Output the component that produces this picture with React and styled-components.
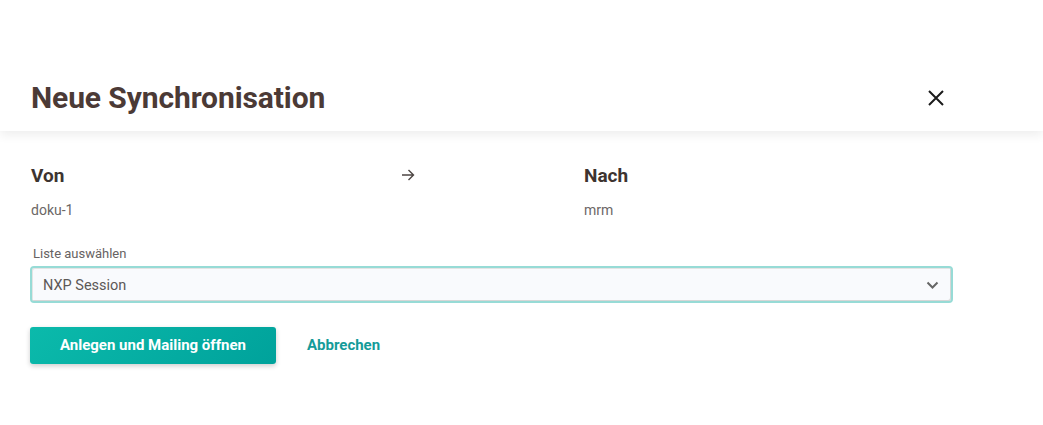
import React from 'react';
import styled, { createGlobalStyle } from 'styled-components';

const GlobalStyle = createGlobalStyle`
  html, body {
    margin: 0;
    padding: 0;
    background: #ffffff;
    font-family: Roboto, "Liberation Sans", sans-serif;
  }
`;

const Page = styled.div`
  width: 1043px;
  height: 425px;
  overflow: hidden;
  background: #ffffff;
`;

const Header = styled.header`
  height: 131px;
  box-sizing: border-box;
  padding: 64px 0 0 31px;
  display: flex;
  align-items: center;
  background: #ffffff;
  box-shadow: 0 4px 10px rgba(0, 0, 0, 0.07);
  position: relative;
  z-index: 1;
`;

const HeaderInner = styled.div`
  width: 917px;
  height: 67px;
  display: flex;
  align-items: center;
  justify-content: space-between;
`;

const Title = styled.h1`
  margin: 0;
  font-size: 30px;
  font-weight: 700;
  letter-spacing: -0.1px;
  color: #4b3a36;
`;

const CloseButton = styled.button`
  width: 24px;
  height: 24px;
  padding: 0;
  border: none;
  background: none;
  display: flex;
  align-items: center;
  justify-content: center;
  cursor: pointer;
`;

const Body = styled.main`
  padding: 33px 90px 0 30px;
`;

const Route = styled.div`
  display: grid;
  grid-template-columns: 370px 183px 1fr;
  padding-left: 1px;
`;

const Side = styled.div`
  display: flex;
  flex-direction: column;
  gap: 12px;
`;

const SideTitle = styled.div`
  font-size: 19px;
  font-weight: 700;
  color: #3d3430;
  line-height: 24px;
`;

const SideValue = styled.div`
  font-size: 14px;
  color: #6c6766;
  line-height: 20px;
`;

const ArrowCell = styled.div`
  padding-top: 2px;
  color: #4d4644;
`;

const Field = styled.div`
  margin-top: 25px;
  display: flex;
  flex-direction: column;
  gap: 3px;
`;

const Label = styled.label`
  font-size: 13px;
  color: #676262;
  padding-left: 3px;
  line-height: 18px;
`;

const Select = styled.div`
  height: 37px;
  box-sizing: border-box;
  border: 2px solid #97dbd6;
  border-radius: 4px;
  background: #f9fafd;
  box-shadow: inset -1px -1px 0 #d6d6d6, inset 1px 1px 0 #e4e4e4;
  display: flex;
  align-items: center;
  justify-content: space-between;
  padding: 1px 12px 0 11px;
  font-size: 14.5px;
  color: #5c5857;
`;

const Actions = styled.div`
  margin-top: 24px;
  display: flex;
  align-items: center;
  gap: 31px;
`;

const PrimaryButton = styled.button`
  width: 246px;
  height: 37px;
  padding: 0 0 1px;
  border: none;
  border-radius: 3px;
  background: linear-gradient(135deg, #0bbaab 0%, #00a29b 100%);
  box-shadow: 0 2px 5px rgba(0, 0, 0, 0.2);
  color: #ffffff;
  font-family: inherit;
  font-size: 15px;
  font-weight: 700;
  cursor: pointer;
`;

const TextButton = styled.button`
  border: none;
  background: none;
  padding: 0 0 1px;
  font-family: inherit;
  font-size: 15px;
  font-weight: 700;
  color: #149b99;
  cursor: pointer;
`;

export default function App() {
  return (
    <Page>
      <GlobalStyle />
      <Header>
        <HeaderInner>
          <Title>Neue Synchronisation</Title>
          <CloseButton aria-label="Schließen">
            <svg width="16" height="16" viewBox="0 0 16 16">
              <path d="M1 1L15 15M15 1L1 15" stroke="#1b1b1b" strokeWidth="2" fill="none" />
            </svg>
          </CloseButton>
        </HeaderInner>
      </Header>
      <Body>
        <Route>
          <Side>
            <SideTitle>Von</SideTitle>
            <SideValue>doku-1</SideValue>
          </Side>
          <ArrowCell>
            <svg width="14" height="12" viewBox="0 0 14 12">
              <path d="M1 6H12.5M7.5 1L12.5 6L7.5 11" stroke="currentColor" strokeWidth="1.4" fill="none" />
            </svg>
          </ArrowCell>
          <Side>
            <SideTitle>Nach</SideTitle>
            <SideValue>mrm</SideValue>
          </Side>
        </Route>
        <Field>
          <Label>Liste auswählen</Label>
          <Select>
            <span>NXP Session</span>
            <svg width="13" height="8" viewBox="0 0 13 8">
              <path d="M1.5 1.5L6.5 6.5L11.5 1.5" stroke="#666" strokeWidth="2" fill="none" />
            </svg>
          </Select>
        </Field>
        <Actions>
          <PrimaryButton>Anlegen und Mailing öffnen</PrimaryButton>
          <TextButton>Abbrechen</TextButton>
        </Actions>
      </Body>
    </Page>
  );
}
